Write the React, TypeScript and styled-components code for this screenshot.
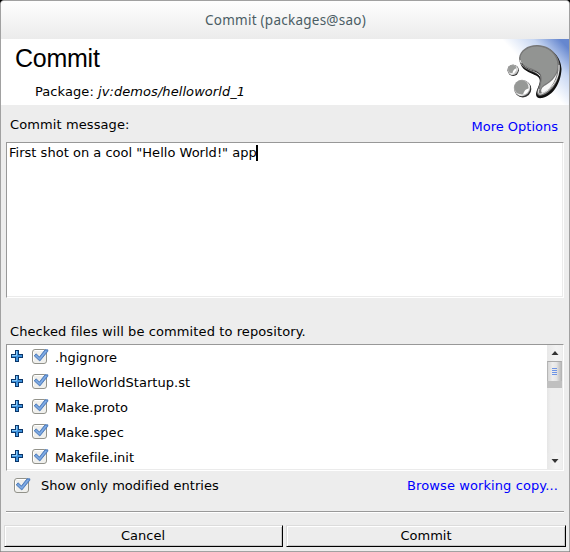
import React from "react";
import styled, { createGlobalStyle } from "styled-components";

const GlobalStyle = createGlobalStyle`
  *, *::before, *::after { box-sizing: border-box; }
  html, body { margin: 0; padding: 0; background: #000; overflow: hidden; }
  button { font: inherit; color: inherit; }
`;

const Dialog = styled.div`
  width: 570px;
  height: 552px;
  display: flex;
  flex-direction: column;
  border: 1px solid #a1a1a1;
  border-radius: 4px 4px 0 0;
  background: #ededed;
  overflow: hidden;
  color: #000;
  font: 13px/16px "DejaVu Sans", sans-serif;
  white-space: pre;
`;

const TitleBar = styled.div`
  height: 38px;
  flex: none;
  padding-top: 9px;
  text-align: center;
  background: linear-gradient(#fefefe, #ebebeb);
  color: #4b5d64;
  font: 13.5px/20px "Noto Sans", "Open Sans", sans-serif;
  letter-spacing: 0.25px;
  padding-left: 1px;
`;

const Header = styled.header`
  height: 66px;
  flex: none;
  display: flex;
  justify-content: space-between;
  background: #fff;
`;

const Heading = styled.h1`
  margin: 4px 0 0 14px;
  font: 400 25px/30px "Liberation Sans", Arial, sans-serif;
  letter-spacing: -0.25px;
`;

const Package = styled.div`
  margin: 11px 0 0 34px;
  letter-spacing: 0.07px;
`;

const Logo = styled.svg`
  width: 66px;
  height: 66px;
  flex: none;
`;

const LabelRow = styled.div<{ $height: number; $top: number }>`
  height: ${(p) => p.$height}px;
  flex: none;
  display: flex;
  justify-content: space-between;
  padding: ${(p) => p.$top}px 11px 0 9px;
`;

const Label = styled.span`
  letter-spacing: 0.1px;
`;

const Link = styled.a<{ $drop?: number; $tracking?: number }>`
  color: #0000ff;
  margin-top: ${(p) => p.$drop ?? 0}px;
  letter-spacing: ${(p) => p.$tracking ?? 0}px;
`;

const Sunken = styled.div<{ $height: number }>`
  height: ${(p) => p.$height}px;
  width: 558px;
  margin-left: 5px;
  flex: none;
  display: flex;
  background: #fff;
  border: 1px solid;
  border-color: #989898 #fff #fff #989898;
  box-shadow: inset -1px -1px #ebebeb;
`;

const Message = styled.div`
  padding: 2px 0 0 2px;
  display: flex;
  letter-spacing: 0.02px;
`;

const Caret = styled.span`
  width: 2px;
  height: 16px;
  margin-left: -1px;
  background: #000;
`;

const FileList = styled.div`
  flex: 1;
  height: 125px;
`;

const FileRow = styled.div`
  height: 25px;
  display: flex;
  padding-left: 4px;
`;

const PlusSvg = styled.svg`
  width: 12px;
  height: 12px;
  margin-top: 5px;
`;

const CheckSvg = styled.svg<{ $left: number; $top: number }>`
  width: 17px;
  height: 16px;
  flex: none;
  margin: ${(p) => p.$top}px 0 0 ${(p) => p.$left}px;
`;

const FileName = styled.span`
  margin: 5px 0 0 6px;
  letter-spacing: 0.03px;
`;

const Scrollbar = styled.div`
  width: 15px;
  height: 124px;
  margin-right: 1px;
  display: flex;
  flex-direction: column;
  background: linear-gradient(90deg, #e5e5e5, #eee 25%);
`;

const ScrollButton = styled.div`
  height: 16px;
  flex: none;
  display: grid;
  place-items: center;
  background: linear-gradient(90deg, #e8e8e8, #f3f3f3 60%, #efefef);
`;

const Thumb = styled.div`
  height: 20px;
  flex: none;
  display: flex;
  flex-direction: column;
  align-items: center;
  gap: 1px;
  padding-top: 6px;
  border: 1px solid #b5b5b5;
  border-top-color: #aaa;
  border-bottom: 0;
  background: linear-gradient(90deg, #d6d6d6, #eee 35%, #e5e5e5 65%, #bbb);
`;

const Grip = styled.i`
  width: 5px;
  height: 1px;
  background: #6d94e6;
`;

const ThumbEnd = styled.div`
  height: 7px;
  flex: none;
  background: #c0c0c0;
`;

const Track = styled.div`
  flex: 1;
`;

const Options = styled.div`
  height: 40px;
  flex: none;
  display: flex;
  padding: 7px 11px 0 12px;
`;

const OptionLabel = styled.span`
  flex: 1;
  margin-left: 10px;
  letter-spacing: 0.03px;
`;

const Divider = styled.div`
  height: 2px;
  flex: none;
  margin: 0 5px;
  border-top: 1px solid #999;
  border-bottom: 1px solid #fff;
`;

const Buttons = styled.div`
  display: grid;
  grid-template-columns: 279px 280px;
  column-gap: 3px;
  padding: 12px 0 0 3px;
`;

const Button = styled.button<{ $shift?: number }>`
  height: 22px;
  padding: 0 ${(p) => p.$shift ?? 0}px 0 0;
  border: 1px solid;
  border-color: #dcdcdc #000 #000 #dcdcdc;
  border-radius: 0;
  background: #ededed;
  box-shadow: inset 1px 1px #fff, inset -1px -1px #c9c9c9;
  line-height: 18px;
`;

function Drops() {
  return (
    <Logo viewBox="0 0 66 66">
      <defs>
        <linearGradient id="sky" x1="0.1" y1="0.9" x2="0.95" y2="0.1">
          <stop offset="0.45" stopColor="#fff" />
          <stop offset="0.75" stopColor="#c8d7f2" />
          <stop offset="1" stopColor="#6687cf" />
        </linearGradient>
        <linearGradient id="shine" x1="0" y1="0" x2="1" y2="1">
          <stop offset="0" stopColor="#888" />
          <stop offset="0.45" stopColor="#bbb" />
          <stop offset="0.65" stopColor="#fff" />
          <stop offset="1" stopColor="#666" />
        </linearGradient>
      </defs>
      <path fill="url(#sky)" d="M0 0h66v66H0z" />
      <path fill="#111" d="M17 21C18 12 26 6 36 7c13 1 22 11 22.500 23C58 44 50 57 39 59c-6 1-7-3-5-8 2-5 4-9 2-12-3-5-19-5-19-18z" />
      <path fill="#777" d="M16 19C17 11 25 5.500 35 6c13 .5 21.500 11 22 22-.5 14-8 26-18.500 28.500-5 1-5-3-3.500-7 2-5 3.500-10 1-13C32 32 16 31 16 19z" />
      <path fill="none" stroke="#e8e8e8" strokeWidth="1" d="M17 21c3 11 15 8 20 16M56 26c1 14-8 26-18 29-3 .5-3-2-2-5" />
      <path fill="none" stroke="#222" strokeWidth="0.8" d="M18.500 24c4 8 14 6 19 12" />
      <path fill="#929492" d="M17.500 19C18 12 26 7.500 34 7.500c12 0 20 8.500 20.500 18C55 35 48 42 42 45c-3 2-4 4-5 6 0-5 3-10 1-15C34 28 18 30 17.500 19z" />
      <path fill="#f9f9f9" d="M54 34c-2 10-8 18-15 20-2-3 0-6 4-8 5-3 9-7 11-12z" />
      <circle cx="19.8" cy="50" r="8.500" fill="#333" />
      <circle cx="19" cy="49" r="8.200" fill="url(#shine)" />
      <circle cx="18.6" cy="48.500" r="6.900" fill="#969896" />
      <path fill="#fff" d="M20 55.500c1-4 3-6 6-6 0 3-3 6-6 6z" />
      <circle cx="10.200" cy="31.300" r="5.600" fill="#2c2c2c" />
      <circle cx="9.800" cy="30.700" r="5.300" fill="url(#shine)" />
      <circle cx="9.500" cy="30.300" r="4" fill="#999b99" />
      <path fill="#fff" d="M9.500 34.500c0-3 2-5 4-5 0 3-2 5-4 5z" />
    </Logo>
  );
}

function Plus() {
  return (
    <PlusSvg viewBox="0 0 12 12">
      <path fill="#0b376b" d="M4 0h4v4h4v4H8v4H4V8H0V4h4z" />
      <path fill="#3f92dc" d="M5 1h2v4h4v2H7v4H5V7H1V5h4z" />
      <path fill="#8bcbf8" d="M5 1h1v5H1V5h4z" />
    </PlusSvg>
  );
}

function Check({ left, top }: { left: number; top: number }) {
  return (
    <CheckSvg $left={left} $top={top} viewBox="0 0 17 16">
      <rect x="0.5" y="1.5" width="14" height="14" rx="2.5" fill="#f0f0ed" stroke="#92928a" />
      <path fill="none" stroke="#fff" d="M2.5 2.5h10M1.5 4v9" />
      <path fill="#6c9bd9" stroke="#3e6fb3" strokeWidth="0.8" strokeLinejoin="round" d="M2.2 7.8l2-2 3.2 3.3L13 1.800h2.800v1.400L7.800 13z" />
      <path fill="none" stroke="#8eb6e9" strokeWidth="0.9" d="M4 7.500l3.600 3.600L14 3" />
    </CheckSvg>
  );
}

function Arrow({ down }: { down?: boolean }) {
  return (
    <svg width="8" height="4" viewBox="0 0 8 4">
      <path fill="#333" d={down ? "M0.5 0h7L4 4z" : "M0.5 4h7L4 0z"} />
    </svg>
  );
}

const files = [".hgignore", "HelloWorldStartup.st", "Make.proto", "Make.spec", "Makefile.init"];

export default function App() {
  return (
    <>
      <GlobalStyle />
      <Dialog>
        <TitleBar>Commit (packages@sao)</TitleBar>
        <Header>
          <div>
            <Heading>Commit</Heading>
            <Package>Package: <em>jv:demos/helloworld_1</em></Package>
          </div>
          <Drops />
        </Header>
        <LabelRow $height={37} $top={12}>
          <Label>Commit message:</Label>
          <Link $drop={2}>More Options</Link>
        </LabelRow>
        <Sunken $height={156}>
          <Message>First shot on a cool "Hello World!" app<Caret /></Message>
        </Sunken>
        <LabelRow $height={46} $top={26}>
          <Label>Checked files will be commited to repository.</Label>
        </LabelRow>
        <Sunken $height={127}>
          <FileList>
            {files.map((name) => (
              <FileRow key={name}>
                <Plus />
                <Check left={9} top={3} />
                <FileName>{name}</FileName>
              </FileRow>
            ))}
          </FileList>
          <Scrollbar>
            <ScrollButton><Arrow /></ScrollButton>
            <Thumb><Grip /><Grip /><Grip /><Grip /></Thumb>
            <ThumbEnd />
            <Track />
            <ScrollButton><Arrow down /></ScrollButton>
          </Scrollbar>
        </Sunken>
        <Options>
          <Check left={1} top={-1} />
          <OptionLabel>Show only modified entries</OptionLabel>
          <Link $tracking={0.1}>Browse working copy...</Link>
        </Options>
        <Divider />
        <Buttons>
          <Button $shift={1}>Cancel</Button>
          <Button>Commit</Button>
        </Buttons>
      </Dialog>
    </>
  );
}
